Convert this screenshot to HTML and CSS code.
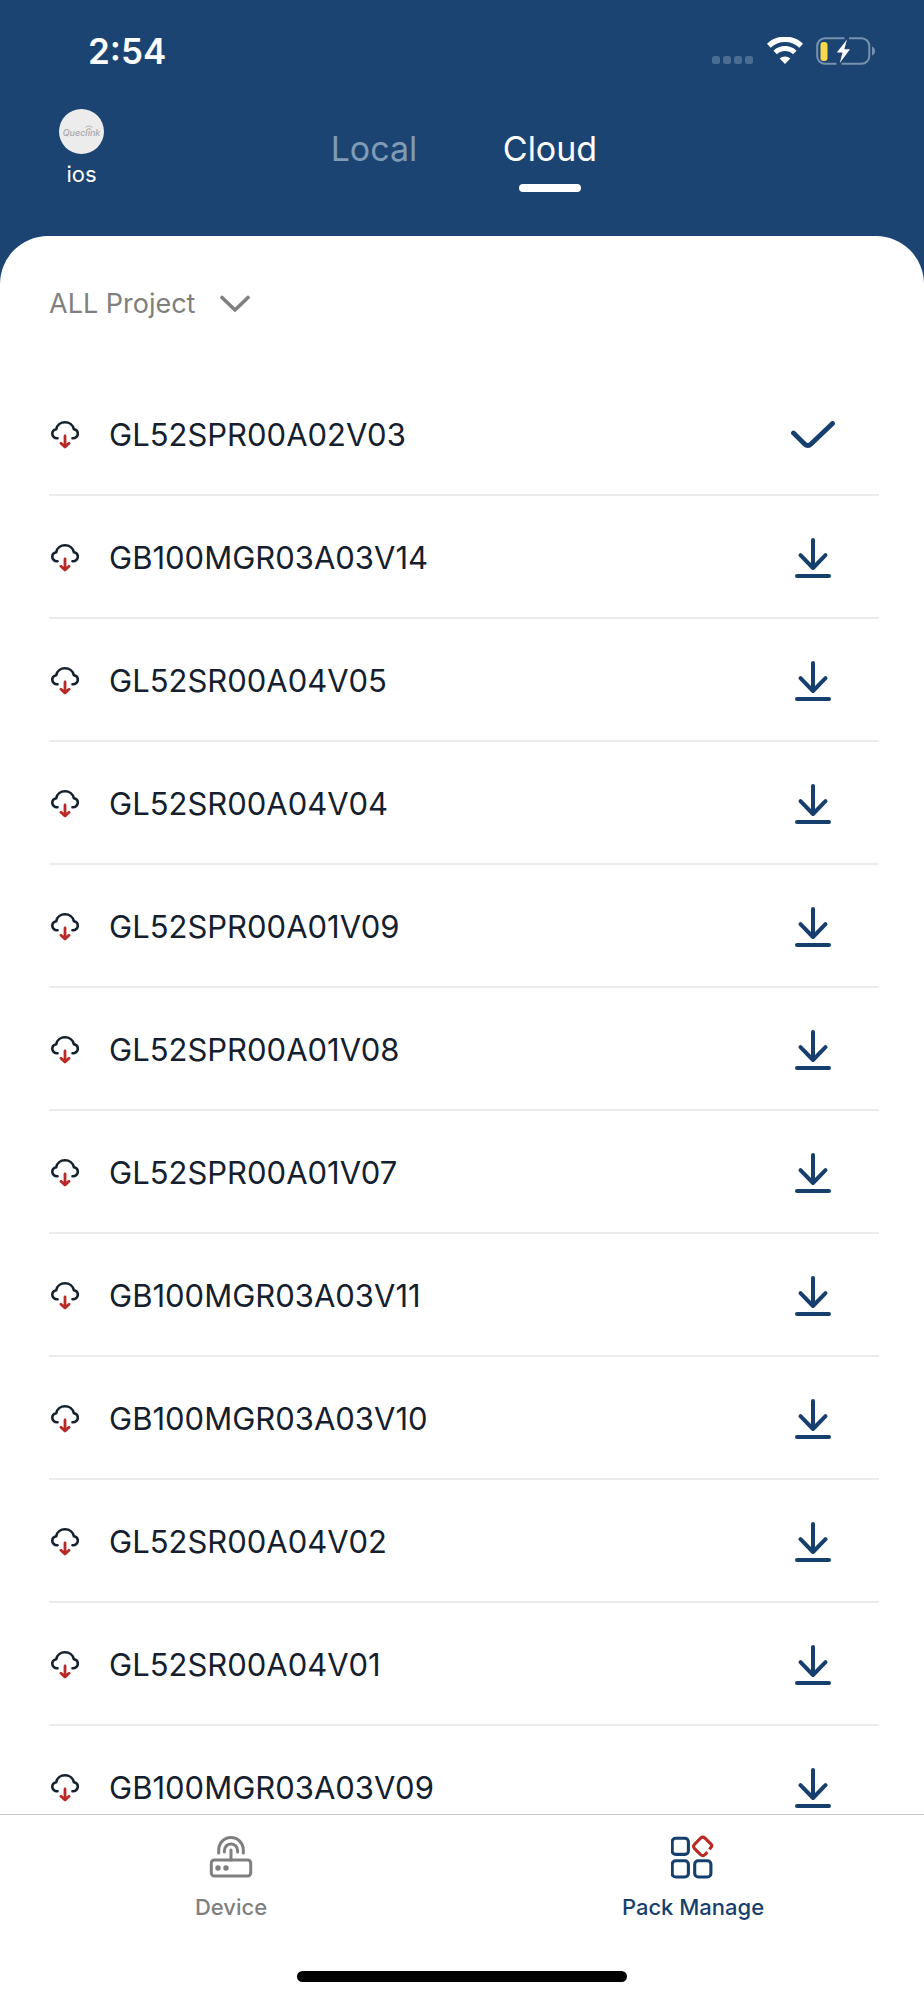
FILE: index.html
```html
<!DOCTYPE html>
<html lang="en">
<head>
<meta charset="utf-8">
<meta name="viewport" content="width=device-width, initial-scale=1">
<title>Pack Manage</title>
<link rel="stylesheet" href="styles.css">
</head>
<body>
<svg class="sprite" aria-hidden="true">
  <symbol id="cloud" viewBox="0 0 28 28">
    <path d="M6.500 17.200C3.400 17.400 1.300 15.400 1.300 12.700c0-2.400 1.700-4.100 3.900-4.500C6 4.200 9.600 1.300 14 1.300s8 2.900 8.900 6.900c2.200.4 3.900 2.100 3.900 4.500 0 2.500-2.200 4.700-5.300 4.500" fill="none" stroke="#14202e" stroke-width="2.600" stroke-linecap="round"/>
    <path d="M14 15v10M10 22.200l4 3.900 4-3.900" fill="none" stroke="#b92a27" stroke-width="2.800" stroke-linecap="round" stroke-linejoin="round"/>
  </symbol>
  <symbol id="download" viewBox="0 0 36 40">
    <path d="M18 2v28M5.500 17.200L18 30 30.500 17.200M2 38h32" fill="none" stroke="#173f6e" stroke-width="4" stroke-linecap="round" stroke-linejoin="round"/>
  </symbol>
</svg>
<div class="app">
  <header class="header">
    <div class="status">
      <span class="time">2:54</span>
      <div class="status-icons">
        <svg width="42" height="28" viewBox="0 0 42 28" fill="#4a6d93"><rect x="0" y="19" width="8" height="8" rx="2.500"/><rect x="11" y="19" width="8" height="8" rx="2.500"/><rect x="22" y="19" width="8" height="8" rx="2.500"/><rect x="33" y="19" width="8" height="8" rx="2.500"/></svg>
        <svg width="36" height="28" viewBox="0 0 36 28" fill="none" stroke="#fff"><path d="M1.800 8.700a23.500 23.500 0 0 1 32.400 0" stroke-width="5.400"/><path d="M8.200 15.500a14.200 14.200 0 0 1 19.600 0" stroke-width="5"/><path d="M18 27l-5.300-5.400a7.700 7.700 0 0 1 10.600 0z" fill="#fff" stroke="none"/></svg>
        <svg width="60" height="28" viewBox="0 0 60 28"><path d="M28.500 1.200H9A7.800 7.800 0 0 0 1.200 9v10A7.800 7.800 0 0 0 9 26.800h11.500M33 1.200h12.500A7.800 7.800 0 0 1 53.300 9v10a7.800 7.800 0 0 1-7.800 7.800H25.500" fill="none" stroke="#7892ad" stroke-width="2"/><path d="M56 9.500c4 1.500 4 7.500 0 9z" fill="#7892ad"/><rect x="4.500" y="5" width="7" height="19" rx="3" fill="#fbd74a"/><path d="M31 2.500L20.800 15.500h5.700L23.800 26 34 12.300h-5.700z" fill="#fff"/></svg>
      </div>
    </div>
    <div class="topbar">
      <button class="user" type="button">
        <svg width="45" height="45" viewBox="0 0 45 45" aria-hidden="true"><circle cx="22.500" cy="22.500" r="22.500" fill="#ececec"/><text class="brand" x="22.500" y="27" text-anchor="middle">Queclink</text><path d="M26.500 18.500a5 5 0 0 1 7 0M28 20.500a3 3 0 0 1 4.200 0" fill="none" stroke="#b4b4b4"/></svg>
        <span>ios</span>
      </button>
      <nav class="tabs">
        <button class="tab" type="button">Local</button>
        <button class="tab tab-active" type="button">Cloud</button>
      </nav>
    </div>
  </header>
  <main class="sheet">
    <div class="filter">
      <select class="project" aria-label="Project"><option>ALL Project</option></select>
      <svg class="chevron" width="30" height="18" viewBox="0 0 30 18" aria-hidden="true"><path d="M2 2.500l13 12.500 13-12.500" fill="none" stroke="#7f7f7f" stroke-width="3.600" stroke-linecap="round" stroke-linejoin="round"/></svg>
    </div>
    <ul class="list">
      <li class="row"><svg class="cloud"><use href="#cloud"/></svg><span class="name">GL52SPR00A02V03</span><button class="action" type="button" aria-label="Downloaded"><svg width="44" height="28" viewBox="0 0 44 28"><path d="M2.500 12L13.600 23q3.200 3.200 6.400 0L41.500 2.500" fill="none" stroke="#173f6e" stroke-width="4.800" stroke-linecap="round" stroke-linejoin="round"/></svg></button></li>
      <li class="row"><svg class="cloud"><use href="#cloud"/></svg><span class="name">GB100MGR03A03V14</span><button class="action" type="button" aria-label="Download"><svg class="down"><use href="#download"/></svg></button></li>
      <li class="row"><svg class="cloud"><use href="#cloud"/></svg><span class="name">GL52SR00A04V05</span><button class="action" type="button" aria-label="Download"><svg class="down"><use href="#download"/></svg></button></li>
      <li class="row"><svg class="cloud"><use href="#cloud"/></svg><span class="name">GL52SR00A04V04</span><button class="action" type="button" aria-label="Download"><svg class="down"><use href="#download"/></svg></button></li>
      <li class="row"><svg class="cloud"><use href="#cloud"/></svg><span class="name">GL52SPR00A01V09</span><button class="action" type="button" aria-label="Download"><svg class="down"><use href="#download"/></svg></button></li>
      <li class="row"><svg class="cloud"><use href="#cloud"/></svg><span class="name">GL52SPR00A01V08</span><button class="action" type="button" aria-label="Download"><svg class="down"><use href="#download"/></svg></button></li>
      <li class="row"><svg class="cloud"><use href="#cloud"/></svg><span class="name">GL52SPR00A01V07</span><button class="action" type="button" aria-label="Download"><svg class="down"><use href="#download"/></svg></button></li>
      <li class="row"><svg class="cloud"><use href="#cloud"/></svg><span class="name">GB100MGR03A03V11</span><button class="action" type="button" aria-label="Download"><svg class="down"><use href="#download"/></svg></button></li>
      <li class="row"><svg class="cloud"><use href="#cloud"/></svg><span class="name">GB100MGR03A03V10</span><button class="action" type="button" aria-label="Download"><svg class="down"><use href="#download"/></svg></button></li>
      <li class="row"><svg class="cloud"><use href="#cloud"/></svg><span class="name">GL52SR00A04V02</span><button class="action" type="button" aria-label="Download"><svg class="down"><use href="#download"/></svg></button></li>
      <li class="row"><svg class="cloud"><use href="#cloud"/></svg><span class="name">GL52SR00A04V01</span><button class="action" type="button" aria-label="Download"><svg class="down"><use href="#download"/></svg></button></li>
      <li class="row"><svg class="cloud"><use href="#cloud"/></svg><span class="name">GB100MGR03A03V09</span><button class="action" type="button" aria-label="Download"><svg class="down"><use href="#download"/></svg></button></li>
    </ul>
  </main>
  <footer class="bottom">
    <nav class="bottom-nav">
      <a class="nav-item" href="#device">
        <svg width="44" height="44" viewBox="0 0 44 44" fill="none" stroke="#7f7f7f" stroke-width="3" stroke-linecap="round"><rect x="2.300" y="25" width="39.400" height="16" rx="3"/><path d="M22 15v10M9.700 18v-3.200a12.300 12.300 0 0 1 24.600 0v3.200M15.400 17v-1.400a6.600 6.600 0 0 1 13.200 0v1.400"/><circle cx="9" cy="33" r="2.700" fill="#7f7f7f" stroke="none"/><circle cx="17" cy="33" r="2.700" fill="#7f7f7f" stroke="none"/></svg>
        <span>Device</span>
      </a>
      <a class="nav-item nav-current" href="#packs">
        <svg width="44" height="44" viewBox="1 0 44 44" fill="none" stroke="#173f6e" stroke-width="3.100"><rect x="2.200" y="3.200" width="16.200" height="16.200" rx="3.500"/><rect x="2.200" y="25.800" width="16.200" height="16.200" rx="3.500"/><rect x="24.700" y="25.800" width="16.200" height="16.200" rx="3.500"/><path d="M39.400 14.400l1.600-2q1.600-1.600 0-3.200l-6-6q-2.200-2-4.400 0l-6 6q-2 2.200 0 4.400l6 6q2.200 2 4.400 0l2.400-2.400" stroke="#b92a27"/></svg>
        <span>Pack Manage</span>
      </a>
    </nav>
    <div class="home"></div>
  </footer>
</div>
</body>
</html>
```
FILE: styles.css
```css
* { box-sizing: border-box; }
body {
  margin: 0;
  background: #1b4473;
  color: #14202e;
  font-family: Inter, "Liberation Sans", sans-serif;
}
button, select {
  margin: 0;
  padding: 0;
  border: 0;
  background: none;
  color: inherit;
  font: inherit;
}
svg { display: block; flex: none; }
.sprite { position: absolute; width: 0; height: 0; }
.app {
  display: flex;
  flex-direction: column;
  height: 100vh;
}
.header {
  flex: none;
  padding-bottom: 44px;
  color: #fff;
}
.status {
  display: flex;
  align-items: center;
  justify-content: space-between;
  height: 101px;
  padding: 0 48px 0 88px;
}
.time { font-size: 35px; font-weight: 600; }
.status-icons { display: flex; gap: 13px; }
.topbar {
  display: grid;
  grid-template-columns: 1fr auto 1fr;
  align-items: start;
  padding: 8px 59px 0;
}
.user {
  display: flex;
  flex-direction: column;
  align-items: center;
  justify-self: start;
  gap: 7px;
  font-size: 22px;
  line-height: 26px;
}
.brand { fill: #a8a8a8; font-size: 9px; font-style: italic; font-weight: 500; }
.tabs { display: flex; padding-top: 20px; }
.tab {
  display: flex;
  flex-direction: column;
  align-items: center;
  width: 176px;
  font-size: 34px;
  line-height: 40px;
  color: #809cb5;
}
.tab-active { color: #fff; }
.tab-active::after {
  content: "";
  width: 62px;
  height: 8px;
  margin-top: 15px;
  border-radius: 4px;
  background: #fff;
}
.sheet {
  flex: 1;
  min-height: 0;
  display: flex;
  flex-direction: column;
  padding: 48px 45px 0 49px;
  border-radius: 48px 48px 0 0;
  background: #fff;
}
.filter {
  display: flex;
  align-items: center;
  gap: 24px;
  height: 40px;
  margin-bottom: 49px;
  color: #7f7f7f;
}
.project { appearance: none; font-size: 27px; line-height: 40px; }
.list {
  flex: 1;
  min-height: 0;
  margin: 0;
  padding: 0;
  overflow-y: auto;
  scrollbar-width: none;
  list-style: none;
}
.row {
  display: flex;
  align-items: center;
  height: 123px;
  padding: 2px 44px 0 2px;
  border-bottom: 2px solid #ebebeb;
}
.cloud { width: 28px; height: 28px; }
.name { flex: 1; margin-left: 30px; font-size: 31px; }
.action {
  display: flex;
  justify-content: center;
  width: 44px;
}
.down { width: 36px; height: 40px; }
.bottom {
  flex: none;
  padding: 20px 0 18px;
  border-top: 1px solid #c6c6c6;
  background: #fff;
}
.bottom-nav { display: grid; grid-template-columns: 1fr 1fr; }
.nav-item {
  display: flex;
  flex-direction: column;
  align-items: center;
  gap: 15px;
  color: #7f7f7f;
  font-size: 22px;
  font-weight: 500;
  line-height: 26px;
  text-decoration: none;
}
.nav-current { color: #173f6e; }
.home {
  width: 330px;
  height: 11px;
  margin: 51px auto 0;
  border-radius: 6px;
  background: #000;
}
```
